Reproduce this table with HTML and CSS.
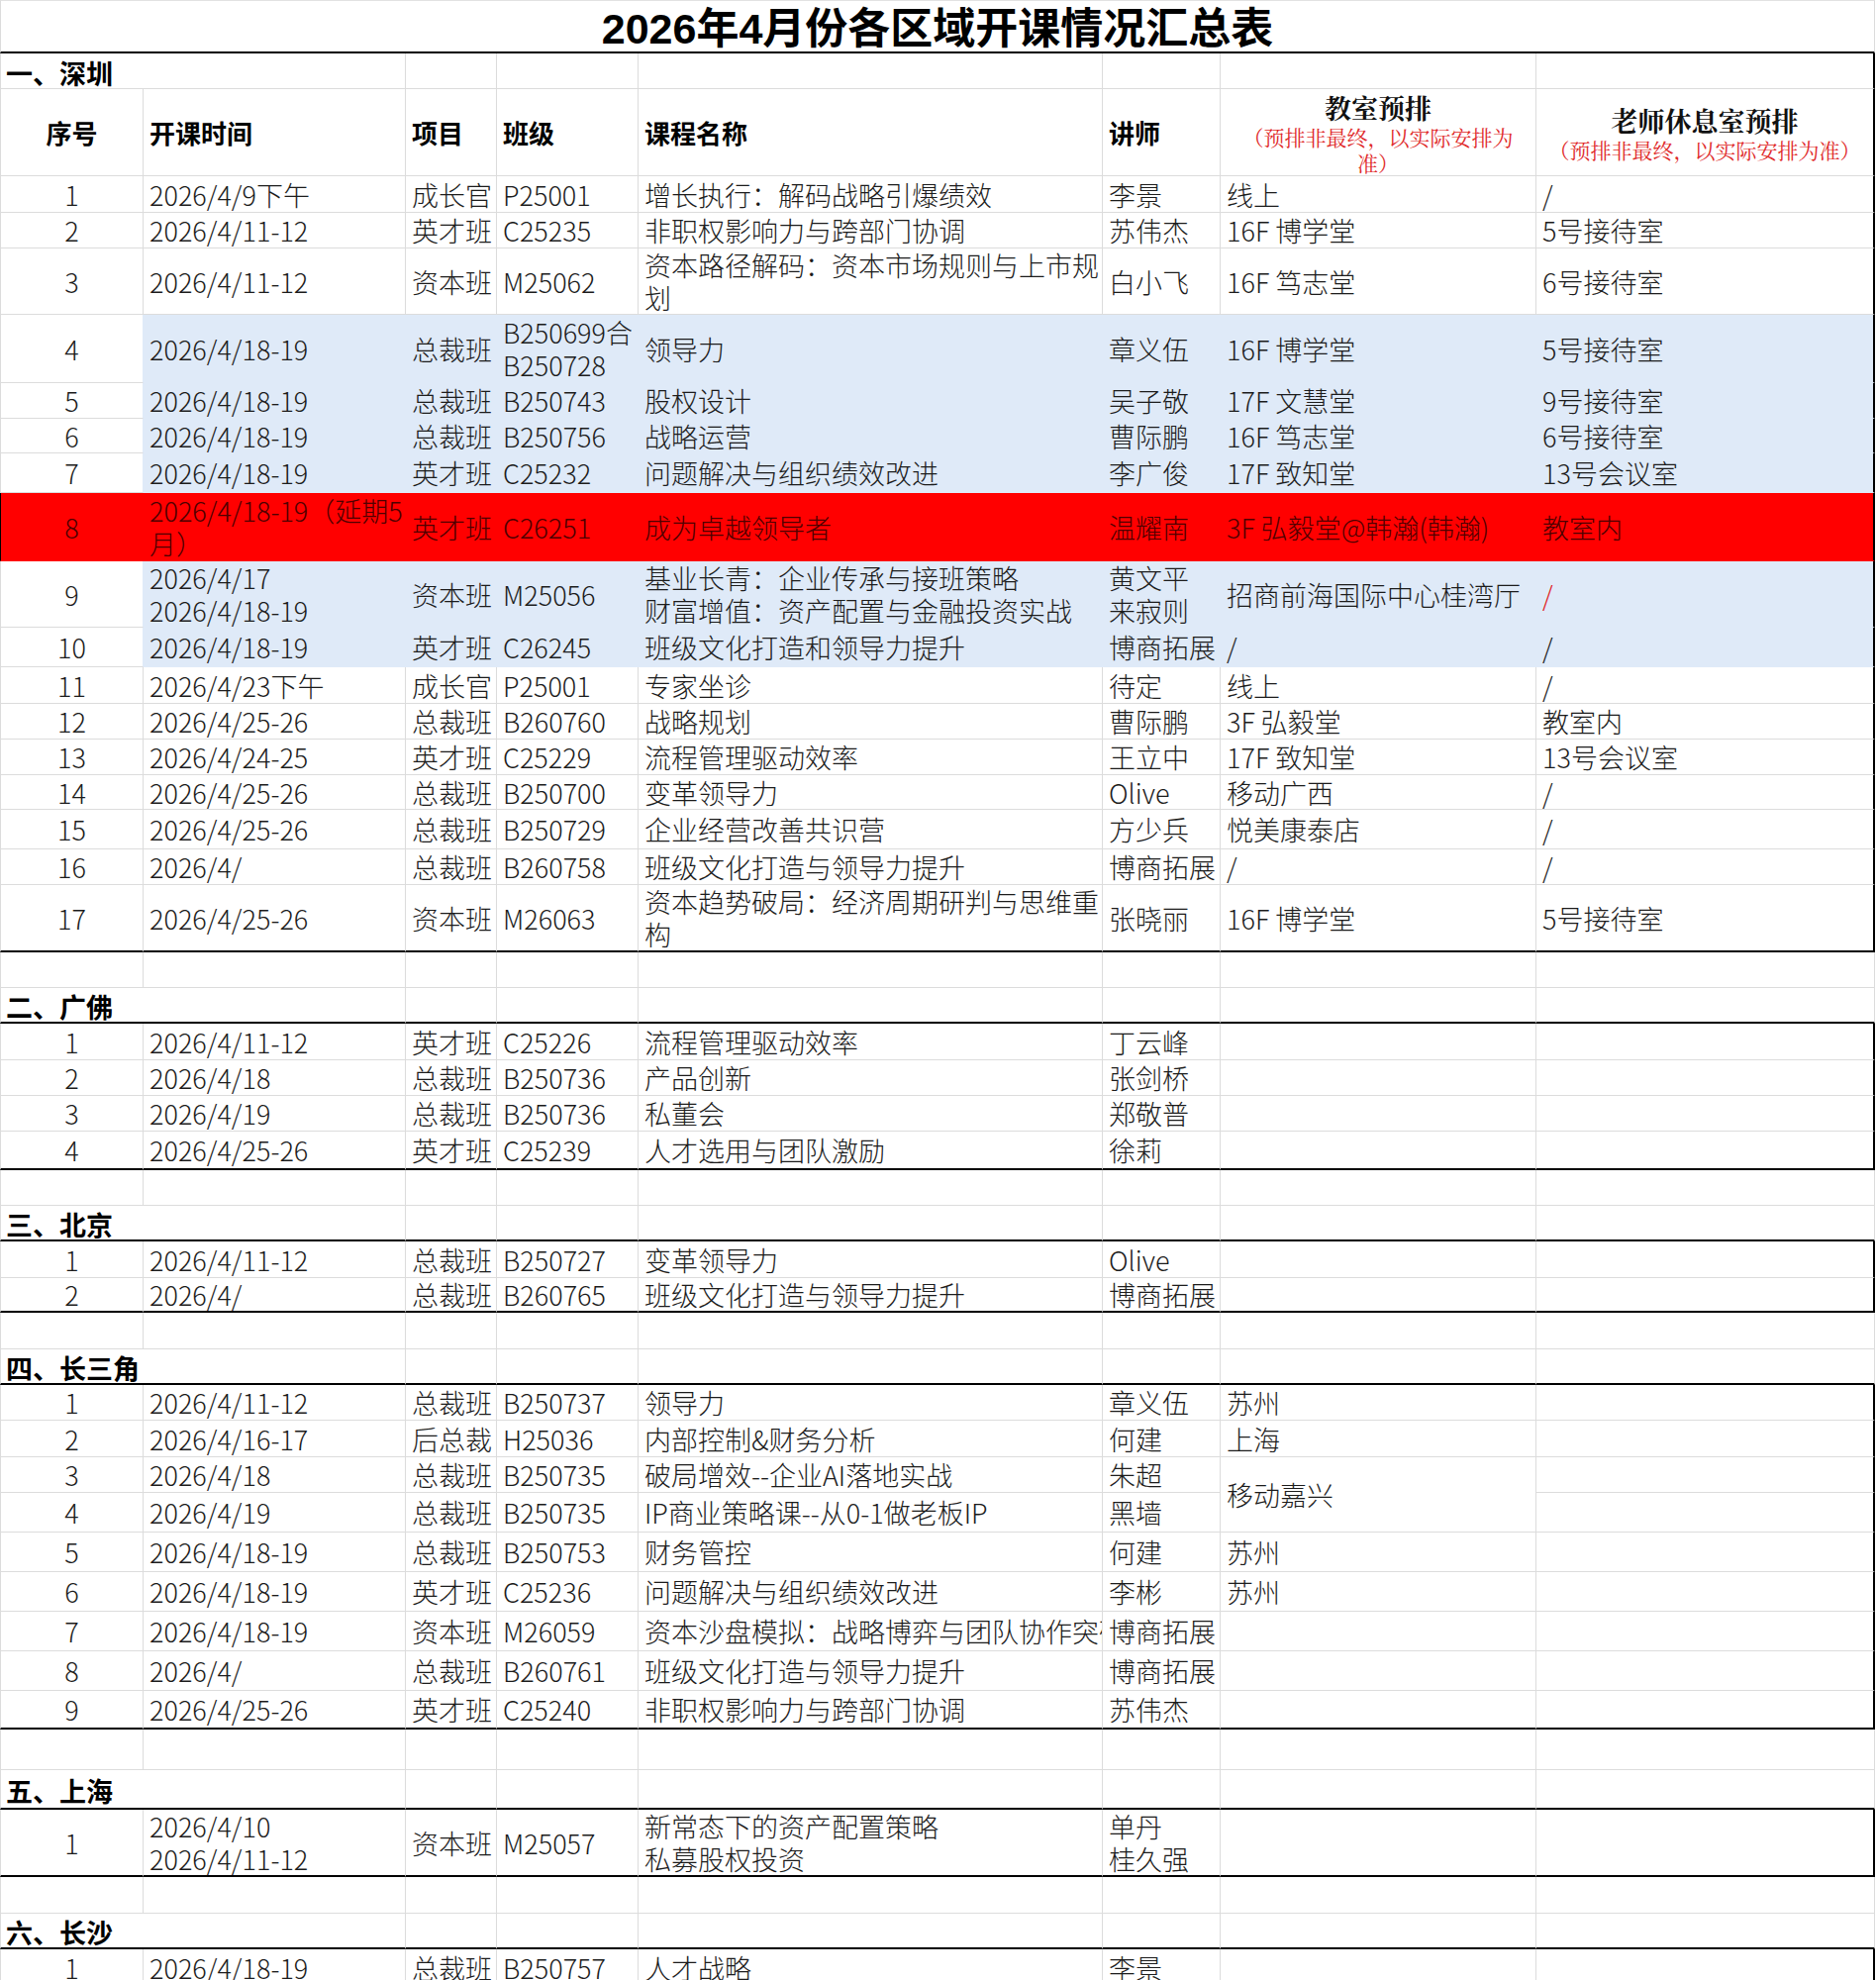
FILE: index.html
```
<!DOCTYPE html>
<html lang="zh-CN">
<head>
<meta charset="utf-8">
<title>2026年4月份各区域开课情况汇总表</title>
<link rel="stylesheet" href="styles.css">
</head>
<body>
<table class="sheet">
<colgroup>
<col class="c1"><col class="c2"><col class="c3"><col class="c4"><col class="c5"><col class="c6"><col class="c7"><col class="c8">
</colgroup>
<tbody>
<tr class="r54 xb first"><td colspan="8" class="title">2026年4月份各区域开课情况汇总表</td></tr>

<tr class="r36 blk"><td colspan="2" class="sec">一、深圳</td><td></td><td></td><td></td><td></td><td></td><td></td></tr>
<tr class="r88 blk head">
<td class="num">序号</td><td>开课时间</td><td>项目</td><td>班级</td><td>课程名称</td><td>讲师</td>
<td class="note"><div class="nt">教室预排</div><div class="nr">（预排非最终，以实际安排为<br>准）</div></td>
<td class="note"><div class="nt">老师休息室预排</div><div class="nr">（预排非最终，以实际安排为准）</div></td>
</tr>
<tr class="r37 blk"><td class="num">1</td><td>2026/4/9下午</td><td>成长官</td><td>P25001</td><td>增长执行：解码战略引爆绩效</td><td>李景</td><td>线上</td><td>/</td></tr>
<tr class="r36 blk"><td class="num">2</td><td>2026/4/11-12</td><td>英才班</td><td>C25235</td><td>非职权影响力与跨部门协调</td><td>苏伟杰</td><td>16F 博学堂</td><td>5号接待室</td></tr>
<tr class="r67 blk"><td class="num">3</td><td>2026/4/11-12</td><td>资本班</td><td>M25062</td><td class="ml">资本路径解码：资本市场规则与上市规<br>划</td><td>白小飞</td><td>16F 笃志堂</td><td>6号接待室</td></tr>
<tr class="r69 blk blue"><td class="num">4</td><td>2026/4/18-19</td><td>总裁班</td><td class="ml">B250699合<br>B250728</td><td>领导力</td><td>章义伍</td><td>16F 博学堂</td><td>5号接待室</td></tr>
<tr class="r36 blk blue"><td class="num">5</td><td>2026/4/18-19</td><td>总裁班</td><td>B250743</td><td>股权设计</td><td>吴子敬</td><td>17F 文慧堂</td><td>9号接待室</td></tr>
<tr class="r35 blk blue"><td class="num">6</td><td>2026/4/18-19</td><td>总裁班</td><td>B250756</td><td>战略运营</td><td>曹际鹏</td><td>16F 笃志堂</td><td>6号接待室</td></tr>
<tr class="r40 blk blue"><td class="num">7</td><td>2026/4/18-19</td><td>英才班</td><td>C25232</td><td>问题解决与组织绩效改进</td><td>李广俊</td><td>17F 致知堂</td><td>13号会议室</td></tr>
<tr class="r69 blk red"><td class="num">8</td><td class="ml">2026/4/18-19（延期5<br>月）</td><td>英才班</td><td>C26251</td><td>成为卓越领导者</td><td>温耀南</td><td>3F 弘毅堂@韩瀚(韩瀚)</td><td>教室内</td></tr>
<tr class="r67 blk blue"><td class="num">9</td><td class="ml">2026/4/17<br>2026/4/18-19</td><td>资本班</td><td>M25056</td><td class="ml">基业长青：企业传承与接班策略<br>财富增值：资产配置与金融投资实战</td><td class="ml">黄文平<br>来寂则</td><td>招商前海国际中心桂湾厅</td><td class="redtxt">/</td></tr>
<tr class="r40 blk blue"><td class="num">10</td><td>2026/4/18-19</td><td>英才班</td><td>C26245</td><td>班级文化打造和领导力提升</td><td>博商拓展</td><td>/</td><td>/</td></tr>
<tr class="r37 blk"><td class="num">11</td><td>2026/4/23下午</td><td>成长官</td><td>P25001</td><td>专家坐诊</td><td>待定</td><td>线上</td><td>/</td></tr>
<tr class="r36 blk"><td class="num">12</td><td>2026/4/25-26</td><td>总裁班</td><td>B260760</td><td>战略规划</td><td>曹际鹏</td><td>3F 弘毅堂</td><td>教室内</td></tr>
<tr class="r36 blk"><td class="num">13</td><td>2026/4/24-25</td><td>英才班</td><td>C25229</td><td>流程管理驱动效率</td><td>王立中</td><td>17F 致知堂</td><td>13号会议室</td></tr>
<tr class="r35 blk"><td class="num">14</td><td>2026/4/25-26</td><td>总裁班</td><td>B250700</td><td>变革领导力</td><td>Olive</td><td>移动广西</td><td>/</td></tr>
<tr class="r40 blk"><td class="num">15</td><td>2026/4/25-26</td><td>总裁班</td><td>B250729</td><td>企业经营改善共识营</td><td>方少兵</td><td>悦美康泰店</td><td>/</td></tr>
<tr class="r36 blk"><td class="num">16</td><td>2026/4/</td><td>总裁班</td><td>B260758</td><td>班级文化打造与领导力提升</td><td>博商拓展</td><td>/</td><td>/</td></tr>
<tr class="r68 blk xb"><td class="num">17</td><td>2026/4/25-26</td><td>资本班</td><td>M26063</td><td class="ml">资本趋势破局：经济周期研判与思维重<br>构</td><td>张晓丽</td><td>16F 博学堂</td><td>5号接待室</td></tr>

<tr class="r36"><td></td><td></td><td></td><td></td><td></td><td></td><td></td><td></td></tr>
<tr class="r36 xb"><td colspan="2" class="sec">二、广佛</td><td></td><td></td><td></td><td></td><td></td><td></td></tr>
<tr class="r37 blk"><td class="num">1</td><td>2026/4/11-12</td><td>英才班</td><td>C25226</td><td>流程管理驱动效率</td><td>丁云峰</td><td></td><td></td></tr>
<tr class="r36 blk"><td class="num">2</td><td>2026/4/18</td><td>总裁班</td><td>B250736</td><td>产品创新</td><td>张剑桥</td><td></td><td></td></tr>
<tr class="r36 blk"><td class="num">3</td><td>2026/4/19</td><td>总裁班</td><td>B250736</td><td>私董会</td><td>郑敬普</td><td></td><td></td></tr>
<tr class="r39 blk xb"><td class="num">4</td><td>2026/4/25-26</td><td>英才班</td><td>C25239</td><td>人才选用与团队激励</td><td>徐莉</td><td></td><td></td></tr>

<tr class="r36"><td></td><td></td><td></td><td></td><td></td><td></td><td></td><td></td></tr>
<tr class="r36 xb"><td colspan="2" class="sec">三、北京</td><td></td><td></td><td></td><td></td><td></td><td></td></tr>
<tr class="r37 blk"><td class="num">1</td><td>2026/4/11-12</td><td>总裁班</td><td>B250727</td><td>变革领导力</td><td>Olive</td><td></td><td></td></tr>
<tr class="r35 blk xb"><td class="num">2</td><td>2026/4/</td><td>总裁班</td><td>B260765</td><td>班级文化打造与领导力提升</td><td>博商拓展</td><td></td><td></td></tr>

<tr class="r37"><td></td><td></td><td></td><td></td><td></td><td></td><td></td><td></td></tr>
<tr class="r35 xb"><td colspan="2" class="sec">四、长三角</td><td></td><td></td><td></td><td></td><td></td><td></td></tr>
<tr class="r36 blk"><td class="num">1</td><td>2026/4/11-12</td><td>总裁班</td><td>B250737</td><td>领导力</td><td>章义伍</td><td>苏州</td><td></td></tr>
<tr class="r37 blk"><td class="num">2</td><td>2026/4/16-17</td><td>后总裁</td><td>H25036</td><td>内部控制&amp;财务分析</td><td>何建</td><td>上海</td><td></td></tr>
<tr class="r36 blk"><td class="num">3</td><td>2026/4/18</td><td>总裁班</td><td>B250735</td><td>破局增效--企业AI落地实战</td><td>朱超</td><td rowspan="2">移动嘉兴</td><td></td></tr>
<tr class="r40 blk"><td class="num">4</td><td>2026/4/19</td><td>总裁班</td><td>B250735</td><td>IP商业策略课--从0-1做老板IP</td><td>黑墙</td><td></td></tr>
<tr class="r40 blk"><td class="num">5</td><td>2026/4/18-19</td><td>总裁班</td><td>B250753</td><td>财务管控</td><td>何建</td><td>苏州</td><td></td></tr>
<tr class="r40 blk"><td class="num">6</td><td>2026/4/18-19</td><td>英才班</td><td>C25236</td><td>问题解决与组织绩效改进</td><td>李彬</td><td>苏州</td><td></td></tr>
<tr class="r40 blk"><td class="num">7</td><td>2026/4/18-19</td><td>资本班</td><td>M26059</td><td class="clip">资本沙盘模拟：战略博弈与团队协作突破</td><td>博商拓展</td><td></td><td></td></tr>
<tr class="r40 blk"><td class="num">8</td><td>2026/4/</td><td>总裁班</td><td>B260761</td><td>班级文化打造与领导力提升</td><td>博商拓展</td><td></td><td></td></tr>
<tr class="r39 blk xb"><td class="num">9</td><td>2026/4/25-26</td><td>英才班</td><td>C25240</td><td>非职权影响力与跨部门协调</td><td>苏伟杰</td><td></td><td></td></tr>

<tr class="r41"><td></td><td></td><td></td><td></td><td></td><td></td><td></td><td></td></tr>
<tr class="r40 xb"><td colspan="2" class="sec">五、上海</td><td></td><td></td><td></td><td></td><td></td><td></td></tr>
<tr class="r67 blk xb"><td class="num">1</td><td class="ml">2026/4/10<br>2026/4/11-12</td><td>资本班</td><td>M25057</td><td class="ml">新常态下的资产配置策略<br>私募股权投资</td><td class="ml">单丹<br>桂久强</td><td></td><td></td></tr>

<tr class="r37"><td></td><td></td><td></td><td></td><td></td><td></td><td></td><td></td></tr>
<tr class="r36 xb"><td colspan="2" class="sec">六、长沙</td><td></td><td></td><td></td><td></td><td></td><td></td></tr>
<tr class="r37 blk"><td class="num">1</td><td>2026/4/18-19</td><td>总裁班</td><td>B250757</td><td>人才战略</td><td>李景</td><td></td><td></td></tr>
</tbody>
</table>
</body>
</html>
```

FILE: styles.css
```
html, body {
  margin: 0;
  padding: 0;
  background: #ffffff;
}

body {
  font-family: "Noto Sans CJK SC", "Noto Sans", sans-serif;
  color: #1c1c1c;
}

.sheet {
  border-collapse: separate;
  border-spacing: 0;
  table-layout: fixed;
  width: 1894px;
}

.c1 { width: 145px; }
.c2 { width: 265px; }
.c3 { width: 92px; }
.c4 { width: 143px; }
.c5 { width: 469px; }
.c6 { width: 119px; }
.c7 { width: 319px; }
.c8 { width: 342px; }

.sheet td {
  padding: 0 0 0 6px;
  font-size: 27px;
  font-weight: 300;
  line-height: 33px;
  white-space: nowrap;
  vertical-align: middle;
  border-right: 1px solid #dcdcdc;
  border-bottom: 1px solid #dcdcdc;
  box-sizing: border-box;
}

.sheet td.clip {
  overflow: hidden;
  text-overflow: clip;
}

.sheet tr > td:first-child {
  border-left: 1px solid #dcdcdc;
}

.first td {
  border-top: 1px solid #e2e2e2;
}

/* row heights */
.r35 { height: 35px; }
.r36 { height: 36px; }
.r37 { height: 37px; }
.r39 { height: 39px; }
.r40 { height: 40px; }
.r41 { height: 41px; }
.r54 { height: 54px; }
.r67 { height: 67px; }
.r68 { height: 68px; }
.r69 { height: 69px; }
.r88 { height: 88px; }

/* black framed blocks */
.xb td {
  border-bottom: 2px solid #000;
}
.blk > td:first-child {
  border-left: 2px solid #000;
}
.blk > td:last-child {
  border-right: 2px solid #000;
}

/* title */
.sheet td.title {
  text-align: center;
  font-family: "Liberation Sans", "Noto Sans CJK SC", sans-serif;
  font-size: 43px;
  font-weight: 700;
  color: #000;
  padding: 4px 0 0 0;
  line-height: 46px;
}

/* section headings */
.sheet td.sec {
  font-size: 27px;
  font-weight: 700;
  color: #000;
  padding: 4px 0 0 5px;
  line-height: 30px;
}

/* header row */
.head td {
  font-size: 26px;
  font-weight: 700;
  color: #000;
}
.sheet .head td.note {
  text-align: center;
  font-family: "Noto Serif CJK SC", "Noto Sans CJK SC", serif;
  white-space: normal;
  padding: 2px 0 0 0;
}
.nt {
  font-size: 27px;
  font-weight: 700;
  line-height: 32px;
  color: #111;
}
.nr {
  font-size: 21px;
  font-weight: 400;
  line-height: 26px;
  color: #e02a2a;
}

.sheet td.num {
  text-align: center;
  padding: 0;
}

.sheet td.ml {
  line-height: 33px;
}

/* light-blue highlighted rows */
.blue td {
  background: #dfeaf8;
  border-right-color: #dfeaf8;
  border-bottom-color: #dfeaf8;
}
.blue > td:first-child {
  background: #ffffff;
  border-bottom-color: #dcdcdc;
  border-right-color: #dfeaf8;
}
.blk.blue > td:last-child {
  border-right-color: #000;
}

/* red highlighted row */
.red td {
  background: #ff0000;
  color: #4d0000;
  border-right-color: #ff0000;
  border-bottom-color: #ff0000;
}
.blk.red > td:first-child {
  border-left-color: #000;
}
.blk.red > td:last-child {
  border-right-color: #000;
}

.sheet td.redtxt {
  color: #e02020;
}
```
